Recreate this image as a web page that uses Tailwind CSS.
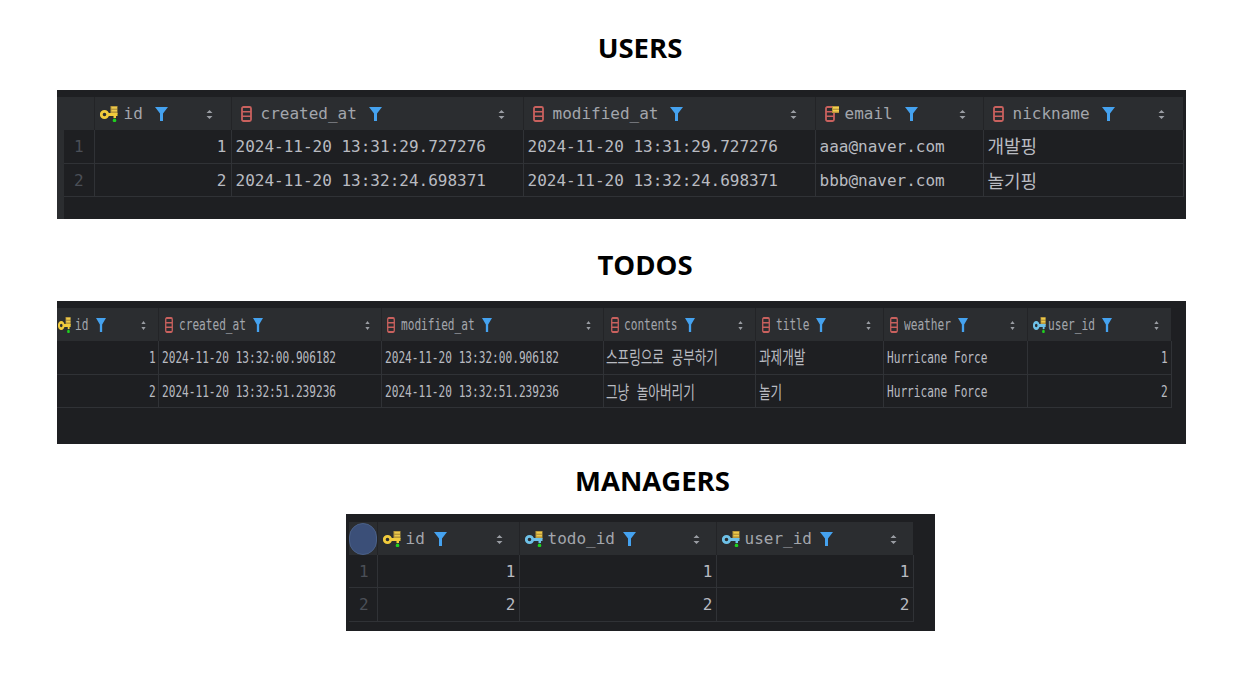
<!DOCTYPE html>
<html lang="ko">
<head>
  <meta charset="UTF-8" />
  <title>Tables</title>
  <script src="https://cdn.jsdelivr.net/npm/@tailwindcss/browser@4"></script>
</head>

<body class="bg-white overflow-hidden">
  <!-- shared icons -->
  <svg class="hidden">
    <defs>
      <g id="key">
        <rect x="10.5" y="0" width="7" height="8" fill="#b8973a" />
        <rect x="11.5" y="1" width="5.5" height="1.6" fill="#ecc94b" />
        <rect x="11.5" y="4" width="5.5" height="1.4" fill="#ecc94b" />
        <circle cx="4.5" cy="8.5" r="3.2" fill="none" stroke="currentColor" stroke-width="2.8" />
        <path d="M7.5 7H17.5V10H16V12H13.5V10H7.5Z" fill="currentColor" />
        <circle cx="14.5" cy="14.4" r="1.8" fill="#1fd01f" />
      </g>
      <g id="col">
        <rect x="1" y="1" width="9" height="14" rx="1.5" fill="none" stroke="#c9615e" stroke-width="1.8" />
        <path d="M1 5.7H10M1 10.3H10" stroke="#c9615e" stroke-width="1.6" />
      </g>
      <g id="colkey">
        <rect x="1" y="1" width="8" height="14" rx="1.5" fill="none" stroke="#c9615e" stroke-width="1.8" />
        <path d="M1 5.7H9M1 10.3H9" stroke="#c9615e" stroke-width="1.6" />
        <rect x="7" y="0" width="7" height="7" fill="#b8973a" />
        <rect x="8" y="1" width="6" height="1.6" fill="#f2d04e" />
        <rect x="8" y="4" width="6" height="1.6" fill="#f2d04e" />
      </g>
      <path id="funnel" d="M0 0H13L8 6.5V14H5V6.5Z" fill="#45a2ef" />
      <path id="sort" d="M3.5 0L6.5 3H.5ZM.5 6H6.5L3.5 9Z" fill="#9a9da3" />
    </defs>
  </svg>

  <h1 class="h-[36px] mt-[30px] mb-[24px] pl-[37px] text-center text-[27.5px] leading-[36px] font-bold text-black font-['Open_Sans',sans-serif]">USERS</h1>

  <div class="ml-[57px] w-[1129px] h-[129px] pt-[7px] pl-[7px] bg-[#1e1f22] relative">
    <div class="absolute left-0 top-[7px] bottom-0 w-[7px] bg-[#2b2d30]"></div>
    <table class="table-fixed w-[1119px] text-[16px] text-[#b9bbc1] font-['DejaVu_Sans_Mono','Noto_Sans_CJK_KR',monospace]">
      <colgroup>
        <col class="w-[30px]" /><col class="w-[137px]" /><col class="w-[292px]" /><col class="w-[292px]" /><col class="w-[168px]" /><col class="w-[200px]" />
      </colgroup>
      <thead>
        <tr class="h-[33px] bg-[#2b2d30] text-[#a3a6ac] [&>th]:pt-[1px]">
          <th class="border-r border-[#232427]"></th>
          <th class="border-r border-[#232427] font-normal">
            <div class="flex items-center pl-[5px] pr-[18px]">
              <svg viewBox="0 0 18 16" class="w-[18px] h-[16px] text-[#f1cb3c]"><use href="#key" /></svg>
              <span class="ml-[6px]">id</span>
              <svg viewBox="0 0 13 14" class="ml-[12px] w-[13px] h-[14px]"><use href="#funnel" /></svg>
              <svg viewBox="0 0 7 9" class="ml-auto w-[7px] h-[9px]"><use href="#sort" /></svg>
            </div>
          </th>
          <th class="border-r border-[#232427] font-normal">
            <div class="flex items-center pl-[9px] pr-[18px]">
              <svg viewBox="0 0 11 16" class="w-[11px] h-[16px]"><use href="#col" /></svg>
              <span class="ml-[9px]">created_at</span>
              <svg viewBox="0 0 13 14" class="ml-[12px] w-[13px] h-[14px]"><use href="#funnel" /></svg>
              <svg viewBox="0 0 7 9" class="ml-auto w-[7px] h-[9px]"><use href="#sort" /></svg>
            </div>
          </th>
          <th class="border-r border-[#232427] font-normal">
            <div class="flex items-center pl-[9px] pr-[18px]">
              <svg viewBox="0 0 11 16" class="w-[11px] h-[16px]"><use href="#col" /></svg>
              <span class="ml-[9px]">modified_at</span>
              <svg viewBox="0 0 13 14" class="ml-[12px] w-[13px] h-[14px]"><use href="#funnel" /></svg>
              <svg viewBox="0 0 7 9" class="ml-auto w-[7px] h-[9px]"><use href="#sort" /></svg>
            </div>
          </th>
          <th class="border-r border-[#232427] font-normal">
            <div class="flex items-center pl-[9px] pr-[17px]">
              <svg viewBox="0 0 14 16" class="w-[14px] h-[16px]"><use href="#colkey" /></svg>
              <span class="ml-[6px]">email</span>
              <svg viewBox="0 0 13 14" class="ml-[12px] w-[13px] h-[14px]"><use href="#funnel" /></svg>
              <svg viewBox="0 0 7 9" class="ml-auto w-[7px] h-[9px]"><use href="#sort" /></svg>
            </div>
          </th>
          <th class="font-normal">
            <div class="flex items-center pl-[9px] pr-[18px]">
              <svg viewBox="0 0 11 16" class="w-[11px] h-[16px]"><use href="#col" /></svg>
              <span class="ml-[9px]">nickname</span>
              <svg viewBox="0 0 13 14" class="ml-[12px] w-[13px] h-[14px]"><use href="#funnel" /></svg>
              <svg viewBox="0 0 7 9" class="ml-auto w-[7px] h-[9px]"><use href="#sort" /></svg>
            </div>
          </th>
        </tr>
      </thead>
      <tbody>
        <tr class="h-[33px] border-b border-[#303236] [&>td]:pt-[1px]">
          <td class="pl-[10px] text-[#4b4f57] border-r border-[#303236]">1</td>
          <td class="pr-[4px] text-right border-r border-[#303236]">1</td>
          <td class="pl-[4px] whitespace-nowrap border-r border-[#303236]">2024-11-20 13:31:29.727276</td>
          <td class="pl-[4px] whitespace-nowrap border-r border-[#303236]">2024-11-20 13:31:29.727276</td>
          <td class="pl-[4px] whitespace-nowrap border-r border-[#303236]">aaa@naver.com</td>
          <td class="pl-[4px] text-[18px] whitespace-nowrap border-r border-[#303236]">개발핑</td>
        </tr>
        <tr class="h-[33px] border-b border-[#303236] [&>td]:pt-[3px]">
          <td class="pl-[10px] text-[#4b4f57] border-r border-[#303236]">2</td>
          <td class="pr-[4px] text-right border-r border-[#303236]">2</td>
          <td class="pl-[4px] whitespace-nowrap border-r border-[#303236]">2024-11-20 13:32:24.698371</td>
          <td class="pl-[4px] whitespace-nowrap border-r border-[#303236]">2024-11-20 13:32:24.698371</td>
          <td class="pl-[4px] whitespace-nowrap border-r border-[#303236]">bbb@naver.com</td>
          <td class="pl-[4px] text-[18px] whitespace-nowrap border-r border-[#303236]">놀기핑</td>
        </tr>
      </tbody>
    </table>
  </div>

  <h1 class="h-[36px] mt-[28px] mb-[18px] pl-[47px] text-center text-[27.5px] leading-[36px] font-bold text-black font-['Open_Sans',sans-serif]">TODOS</h1>

  <div class="ml-[57px] w-[1129px] h-[143px] pt-[7px] bg-[#1e1f22]">
    <table class="table-fixed w-[1114px] text-[16px] text-[#b9bbc1] font-['DejaVu_Sans_Mono','Noto_Sans_CJK_KR',monospace]">
      <colgroup>
        <col class="w-[101px]" /><col class="w-[223px]" /><col class="w-[222px]" /><col class="w-[152px]" /><col class="w-[128px]" /><col class="w-[144px]" /><col class="w-[144px]" />
      </colgroup>
      <thead>
        <tr class="h-[33px] bg-[#2b2d30] text-[#a3a6ac] [&>th]:pt-[1px]">
          <th class="border-r border-[#232427] font-normal">
            <div class="flex items-center pl-[1px] pr-[12px]">
              <svg viewBox="0 0 18 16" preserveAspectRatio="none" class="w-[13px] h-[16px] text-[#f1cb3c]"><use href="#key" /></svg>
              <span class="w-[14px] ml-[4px] origin-left scale-x-[0.695]">id</span>
              <svg viewBox="0 0 13 14" preserveAspectRatio="none" class="ml-[7px] w-[10px] h-[14px]"><use href="#funnel" /></svg>
              <svg viewBox="0 0 7 9" preserveAspectRatio="none" class="ml-auto w-[5px] h-[9px]"><use href="#sort" /></svg>
            </div>
          </th>
          <th class="border-r border-[#232427] font-normal">
            <div class="flex items-center pl-[6px] pr-[11px]">
              <svg viewBox="0 0 11 16" preserveAspectRatio="none" class="w-[8px] h-[16px]"><use href="#col" /></svg>
              <span class="w-[67px] ml-[6px] origin-left scale-x-[0.695]">created_at</span>
              <svg viewBox="0 0 13 14" preserveAspectRatio="none" class="ml-[7px] w-[10px] h-[14px]"><use href="#funnel" /></svg>
              <svg viewBox="0 0 7 9" preserveAspectRatio="none" class="ml-auto w-[5px] h-[9px]"><use href="#sort" /></svg>
            </div>
          </th>
          <th class="border-r border-[#232427] font-normal">
            <div class="flex items-center pl-[5px] pr-[12px]">
              <svg viewBox="0 0 11 16" preserveAspectRatio="none" class="w-[8px] h-[16px]"><use href="#col" /></svg>
              <span class="w-[74px] ml-[6px] origin-left scale-x-[0.695]">modified_at</span>
              <svg viewBox="0 0 13 14" preserveAspectRatio="none" class="ml-[7px] w-[10px] h-[14px]"><use href="#funnel" /></svg>
              <svg viewBox="0 0 7 9" preserveAspectRatio="none" class="ml-auto w-[5px] h-[9px]"><use href="#sort" /></svg>
            </div>
          </th>
          <th class="border-r border-[#232427] font-normal">
            <div class="flex items-center pl-[7px] pr-[12px]">
              <svg viewBox="0 0 11 16" preserveAspectRatio="none" class="w-[8px] h-[16px]"><use href="#col" /></svg>
              <span class="w-[54px] ml-[5px] origin-left scale-x-[0.695]">contents</span>
              <svg viewBox="0 0 13 14" preserveAspectRatio="none" class="ml-[7px] w-[10px] h-[14px]"><use href="#funnel" /></svg>
              <svg viewBox="0 0 7 9" preserveAspectRatio="none" class="ml-auto w-[5px] h-[9px]"><use href="#sort" /></svg>
            </div>
          </th>
          <th class="border-r border-[#232427] font-normal">
            <div class="flex items-center pl-[6px] pr-[12px]">
              <svg viewBox="0 0 11 16" preserveAspectRatio="none" class="w-[8px] h-[16px]"><use href="#col" /></svg>
              <span class="w-[34px] ml-[6px] origin-left scale-x-[0.695]">title</span>
              <svg viewBox="0 0 13 14" preserveAspectRatio="none" class="ml-[6px] w-[10px] h-[14px]"><use href="#funnel" /></svg>
              <svg viewBox="0 0 7 9" preserveAspectRatio="none" class="ml-auto w-[5px] h-[9px]"><use href="#sort" /></svg>
            </div>
          </th>
          <th class="border-r border-[#232427] font-normal">
            <div class="flex items-center pl-[6px] pr-[12px]">
              <svg viewBox="0 0 11 16" preserveAspectRatio="none" class="w-[8px] h-[16px]"><use href="#col" /></svg>
              <span class="w-[47px] ml-[6px] origin-left scale-x-[0.695]">weather</span>
              <svg viewBox="0 0 13 14" preserveAspectRatio="none" class="ml-[7px] w-[10px] h-[14px]"><use href="#funnel" /></svg>
              <svg viewBox="0 0 7 9" preserveAspectRatio="none" class="ml-auto w-[5px] h-[9px]"><use href="#sort" /></svg>
            </div>
          </th>
          <th class="font-normal">
            <div class="flex items-center pl-[5px] pr-[12px]">
              <svg viewBox="0 0 18 16" preserveAspectRatio="none" class="w-[13px] h-[16px] text-[#6ec1e8]"><use href="#key" /></svg>
              <span class="w-[47px] ml-[2px] origin-left scale-x-[0.695]">user_id</span>
              <svg viewBox="0 0 13 14" preserveAspectRatio="none" class="ml-[7px] w-[10px] h-[14px]"><use href="#funnel" /></svg>
              <svg viewBox="0 0 7 9" preserveAspectRatio="none" class="ml-auto w-[5px] h-[9px]"><use href="#sort" /></svg>
            </div>
          </th>
        </tr>
      </thead>
      <tbody>
        <tr class="h-[33px] border-b border-[#303236] [&>td]:pt-[1px]">
          <td class="pr-[2px] text-right border-r border-[#303236]"><span class="inline-block origin-right scale-x-[0.695]">1</span></td>
          <td class="pl-[3px] whitespace-nowrap border-r border-[#303236]"><span class="inline-block origin-left scale-x-[0.695]">2024-11-20 13:32:00.906182</span></td>
          <td class="pl-[3px] whitespace-nowrap border-r border-[#303236]"><span class="inline-block origin-left scale-x-[0.695]">2024-11-20 13:32:00.906182</span></td>
          <td class="pl-[2px] text-[18px] whitespace-nowrap border-r border-[#303236]"><span class="inline-block origin-left scale-x-[0.7]">스프링으로 공부하기</span></td>
          <td class="pl-[3px] text-[18px] whitespace-nowrap border-r border-[#303236]"><span class="inline-block origin-left scale-x-[0.7]">과제개발</span></td>
          <td class="pl-[3px] whitespace-nowrap border-r border-[#303236]"><span class="inline-block origin-left scale-x-[0.695]">Hurricane Force</span></td>
          <td class="pr-[3px] text-right border-r border-[#303236]"><span class="inline-block origin-right scale-x-[0.695]">1</span></td>
        </tr>
        <tr class="h-[33px] border-b border-[#303236] [&>td]:pt-[3px]">
          <td class="pr-[2px] text-right border-r border-[#303236]"><span class="inline-block origin-right scale-x-[0.695]">2</span></td>
          <td class="pl-[3px] whitespace-nowrap border-r border-[#303236]"><span class="inline-block origin-left scale-x-[0.695]">2024-11-20 13:32:51.239236</span></td>
          <td class="pl-[3px] whitespace-nowrap border-r border-[#303236]"><span class="inline-block origin-left scale-x-[0.695]">2024-11-20 13:32:51.239236</span></td>
          <td class="pl-[2px] text-[18px] whitespace-nowrap border-r border-[#303236]"><span class="inline-block origin-left scale-x-[0.7]">그냥 놀아버리기</span></td>
          <td class="pl-[3px] text-[18px] whitespace-nowrap border-r border-[#303236]"><span class="inline-block origin-left scale-x-[0.7]">놀기</span></td>
          <td class="pl-[3px] whitespace-nowrap border-r border-[#303236]"><span class="inline-block origin-left scale-x-[0.695]">Hurricane Force</span></td>
          <td class="pr-[3px] text-right border-r border-[#303236]"><span class="inline-block origin-right scale-x-[0.695]">2</span></td>
        </tr>
      </tbody>
    </table>
  </div>

  <h1 class="h-[36px] mt-[19px] mb-[15px] pl-[62px] text-center text-[27.5px] leading-[36px] font-bold text-black font-['Open_Sans',sans-serif]">MANAGERS</h1>

  <div class="ml-[346px] w-[589px] h-[117px] pt-[8px] pl-[3px] bg-[#1e1f22]">
    <table class="table-fixed w-[564px] text-[16px] text-[#b9bbc1] font-['DejaVu_Sans_Mono',monospace]">
      <colgroup>
        <col class="w-[28px]" /><col class="w-[142px]" /><col class="w-[197px]" /><col class="w-[197px]" />
      </colgroup>
      <thead>
        <tr class="h-[33px] bg-[#2b2d30] text-[#a3a6ac]">
          <th class="border-r border-[#232427] font-normal">
            <div class="w-[28px] h-[32px] rounded-full bg-[#3b4f78] border border-[#4a6088]"></div>
          </th>
          <th class="border-r border-[#232427] font-normal pt-[1px]">
            <div class="flex items-center pl-[5px] pr-[16px]">
              <svg viewBox="0 0 18 16" class="w-[18px] h-[16px] text-[#f1cb3c]"><use href="#key" /></svg>
              <span class="ml-[5px]">id</span>
              <svg viewBox="0 0 13 14" class="ml-[9px] w-[13px] h-[14px]"><use href="#funnel" /></svg>
              <svg viewBox="0 0 7 9" class="ml-auto w-[7px] h-[9px]"><use href="#sort" /></svg>
            </div>
          </th>
          <th class="border-r border-[#232427] font-normal pt-[1px]">
            <div class="flex items-center pl-[5px] pr-[16px]">
              <svg viewBox="0 0 18 16" class="w-[18px] h-[16px] text-[#6ec1e8]"><use href="#key" /></svg>
              <span class="ml-[5px]">todo_id</span>
              <svg viewBox="0 0 13 14" class="ml-[8px] w-[13px] h-[14px]"><use href="#funnel" /></svg>
              <svg viewBox="0 0 7 9" class="ml-auto w-[7px] h-[9px]"><use href="#sort" /></svg>
            </div>
          </th>
          <th class="font-normal pt-[1px]">
            <div class="flex items-center pl-[5px] pr-[16px]">
              <svg viewBox="0 0 18 16" class="w-[18px] h-[16px] text-[#6ec1e8]"><use href="#key" /></svg>
              <span class="ml-[5px]">user_id</span>
              <svg viewBox="0 0 13 14" class="ml-[8px] w-[13px] h-[14px]"><use href="#funnel" /></svg>
              <svg viewBox="0 0 7 9" class="ml-auto w-[7px] h-[9px]"><use href="#sort" /></svg>
            </div>
          </th>
        </tr>
      </thead>
      <tbody>
        <tr class="h-[32px] border-b border-[#303236] [&>td]:pt-[3px]">
          <td class="pl-[10px] text-[#4b4f57] border-r border-[#303236]">1</td>
          <td class="pr-[3px] text-right border-r border-[#303236]">1</td>
          <td class="pr-[3px] text-right border-r border-[#303236]">1</td>
          <td class="pr-[3px] text-right border-r border-[#303236]">1</td>
        </tr>
        <tr class="h-[34px] border-b border-[#303236] [&>td]:pt-[2px]">
          <td class="pl-[10px] text-[#4b4f57] border-r border-[#303236]">2</td>
          <td class="pr-[3px] text-right border-r border-[#303236]">2</td>
          <td class="pr-[3px] text-right border-r border-[#303236]">2</td>
          <td class="pr-[3px] text-right border-r border-[#303236]">2</td>
        </tr>
      </tbody>
    </table>
  </div>
</body>
</html>
